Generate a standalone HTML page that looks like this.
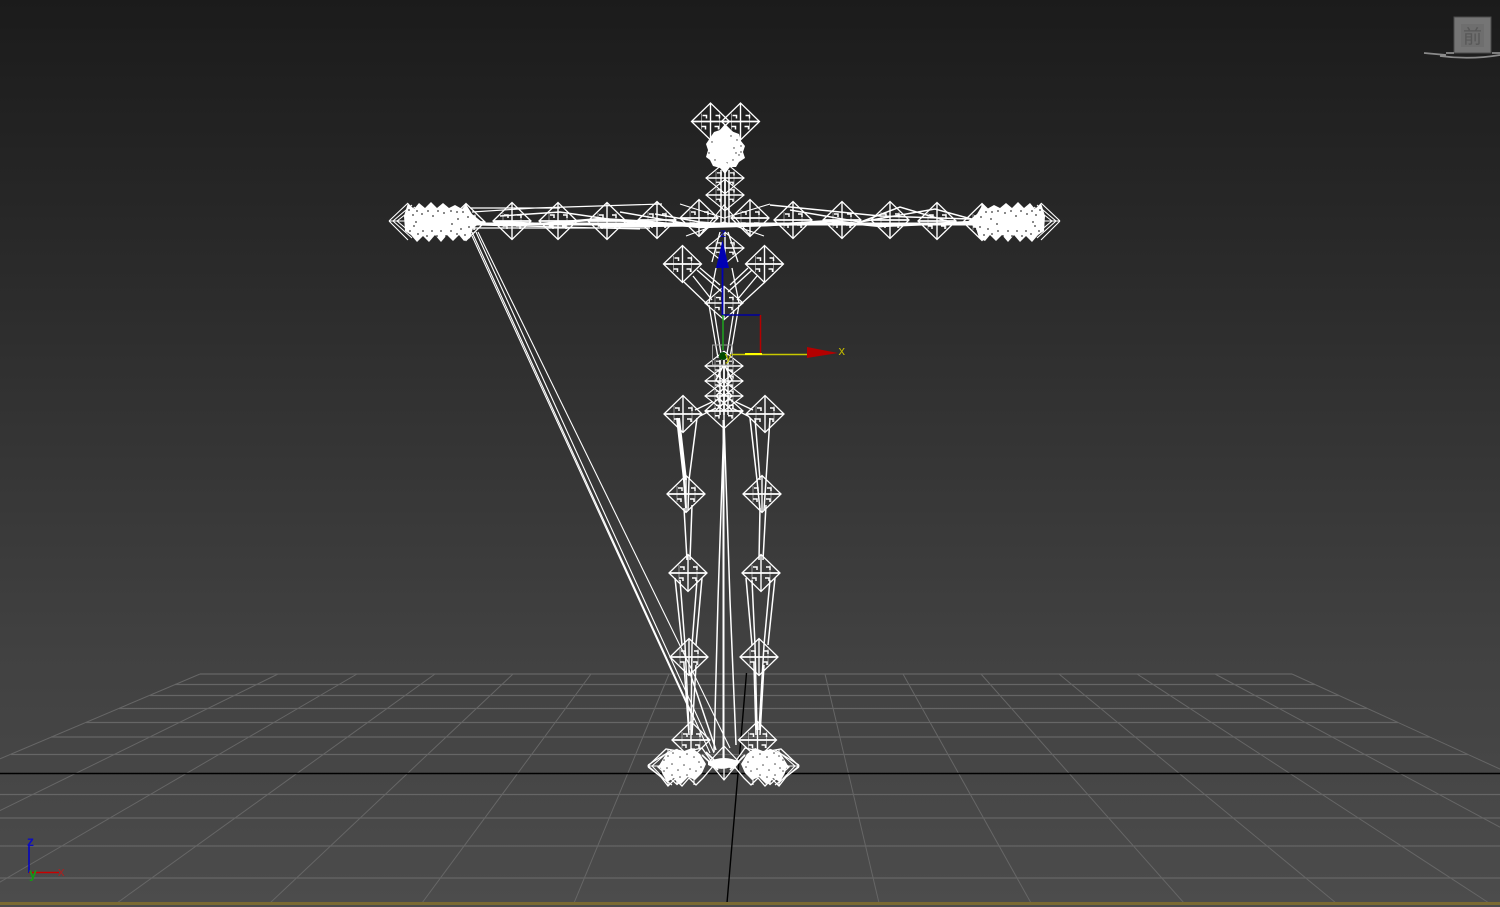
<!DOCTYPE html>
<html><head><meta charset="utf-8"><title>Viewport</title>
<style>
html,body{margin:0;padding:0;width:1500px;height:907px;overflow:hidden;background:#333}
svg{display:block;position:absolute;left:0;top:0}
text{font-family:"Liberation Sans","Noto Sans CJK SC",sans-serif}
</style></head><body>
<svg width="1500" height="907" viewBox="0 0 1500 907" xmlns="http://www.w3.org/2000/svg">
<defs>
<linearGradient id="bg" x1="0" y1="0" x2="0" y2="1">
<stop offset="0" stop-color="#1b1b1b"/><stop offset="0.35" stop-color="#2d2d2d"/><stop offset="0.72" stop-color="#414141"/><stop offset="1" stop-color="#4c4c4c"/>
</linearGradient>
<filter id="soft" x="-5%" y="-5%" width="110%" height="110%"><feGaussianBlur stdDeviation="0.35"/></filter>
<g id="b" fill="none" stroke="#fff" stroke-width="1.300">
<path d="M-19 0L0-18.500L19 0L0 18.500Z"/>
<path d="M-19 0H19" stroke-width="1.800"/>
<path d="M0-18.500V18.500" stroke-width="1.400"/>
<path d="M-9-8L-9 8M9-8L9 8" stroke-width=".7" stroke-opacity=".7"/>
<path d="M-8-6h4v3M5-6h4v3M-9 5h4v3M4 5h4v3" stroke-width="1.500"/>
</g>
<g id="hand">
<path d="M389 221L408 203M389 221L408 240M393 221L412 205M393 221L412 238M397 221L415 207M397 221L415 236M389 221H410" fill="none" stroke="#fff" stroke-width="1.100"/>
<path d="M404 216L408 203L414 209L419 203L425 208L431 202L437 208L443 203L449 208L455 205L462 209L466 204L472 214L482 222L473 228L470 238L464 241L459 235L453 241L447 235L441 242L435 235L429 242L423 236L417 242L411 235L405 231Z" fill="#fff"/>
<path d="M409 210h0M413 215h0M417 211h0M422 214h0M428 211h0M433 216h0M438 211h0M444 213h0M451 211h0M457 212h0M463 212h0M468 217h0M410 231h0M414 226h0M418 234h0M423 231h0M427 236h0M432 231h0M437 236h0M441 231h0M446 236h0M451 231h0M457 234h0M461 229h0M465 235h0M469 227h0M452 224h0M416 222h0M458 219h0" stroke="#2a2a2a" stroke-width="1.700" stroke-linecap="round" fill="none"/>
</g>
<g id="foot">
<path d="M648 766L666 749L684 752L702 748L714 765L703 778L696 785L689 778L682 786L675 779L668 786L661 777Z" fill="none" stroke="#fff" stroke-width="1.300"/>
<path d="M648 766H690M648 767L672 785M648 765L672 750M694 748V785M668 750V785M652 766L668 783M652 766L668 752" fill="none" stroke="#fff" stroke-width="1.100"/>
<path d="M660 764L666 754L676 749L684 751L692 748L700 754L706 764L702 773L695 780L688 777L681 784L674 778L667 782L662 773Z" fill="#fff"/>
<path d="M664 760h0M668 756h0M673 753h0M680 757h0M687 754h0M694 757h0M699 762h0M667 768h0M672 764h0M678 770h0M684 765h0M690 769h0M696 771h0M672 775h0M680 777h0M687 775h0M701 767h0M664 771h0" stroke="#3a3a3a" stroke-width="1.500" stroke-linecap="round" fill="none"/>
</g>
</defs>
<rect width="1500" height="907" fill="url(#bg)"/>

<!-- grid -->
<g fill="none" stroke="#666" stroke-width="1">
<path d="M200 674L-340 903M278 674L-188 903M357 674L-36 903M435 674L117 903M513 674L270 903M591 674L422 903M669 674L574 903M825 674L879 903M903 674L1031 903M981 674L1184 903M1059 674L1336 903M1137 674L1489 903M1215 674L1641 903M1292 674L1793 903"/>
<path d="M200 674H1292M175 684.500H1315M150 695.500H1339M119 708.500H1367M86 722.500H1398M51 737H1430M11 754.500H1468M0 794.500H1500M0 818H1500M0 846H1500M0 878H1500" stroke="#666" stroke-width="1.200"/>
</g>
<path d="M0 773.500H1500" stroke="#000" stroke-width="1.400"/>
<path d="M746.500 673L727 903" stroke="#000" stroke-width="1.400"/>
<rect x="0" y="902" width="1500" height="3" fill="#7a6a32"/>

<!-- view cube -->
<g filter="url(#soft)">
<rect x="1454" y="17" width="37" height="36" fill="#757575" stroke="#4c4c4c" stroke-width="1"/>
<rect x="1461" y="24" width="23" height="23" fill="#6e6e6e"/>
<text x="1472.500" y="43" font-size="19" text-anchor="middle" fill="#585858" style="font-family:'Liberation Sans','Noto Sans CJK SC',sans-serif">前</text>
<path d="M1424 53L1446 55M1446 53H1454M1440 56Q1470 60 1500 55M1492 53H1500" fill="none" stroke="#8a8a8a" stroke-width="1.800"/>
</g>

<!-- skeleton -->
<g filter="url(#soft)">
<!-- long diagonal lines -->
<path d="M472 232L710 753M476 232L714 753M478 232L730 748M472 236L694 720" fill="none" stroke="#fff" stroke-width="1.100"/>

<!-- arm bundle -->
<g fill="none" stroke="#fff">
<path d="M470 208H560M472 212L535 208L662 204M470 228H650M480 225L640 229" stroke-width="1.200"/>
<path d="M495 222L540 224L600 219L650 222L700 227L770 225L830 221L880 226L975 222" stroke-width="2.600"/>
<path d="M470 224H980M600 226L800 224" stroke-width="3"/>
<path d="M655 214L700 222L750 226M500 216L560 212L650 225M770 205L880 216L970 219M790 210L860 222L935 209L975 220M850 226L900 207L950 222M620 212L700 226" stroke-width="1.500"/>
<path d="M680 204L724 218L770 204M686 236L724 222L764 236M700 235L724 205L750 235" stroke-width="1.100"/>
</g>
<use href="#b" transform="translate(512 221)"/>
<use href="#b" transform="translate(558 221)"/>
<use href="#b" transform="translate(607 221)"/>
<use href="#b" transform="translate(657 220)"/>
<use href="#b" transform="translate(699 218)"/>
<use href="#b" transform="translate(750 218)"/>
<use href="#b" transform="translate(793 220)"/>
<use href="#b" transform="translate(842 220)"/>
<use href="#b" transform="translate(890 220)"/>
<use href="#b" transform="translate(937 221)"/>
<use href="#b" transform="translate(466 222)"/>
<use href="#b" transform="translate(982 222)"/>
<use href="#hand"/>
<use href="#hand" transform="translate(1449 0) scale(-1 1)"/>

<!-- head -->
<use href="#b" transform="translate(710.500 121.500)"/>
<use href="#b" transform="translate(740.500 121.500)"/>
<path d="M725 124L731 131L739 134L741 141L745 146L743 152L745 158L739 162L736 167L730 167L725 174L720 168L713 166L710 160L706 157L708 150L706 144L710 138L714 132L720 130Z" fill="#fff"/>
<path d="M737 140h0M741 146h0M734 148h0M739 155h0M733 160h0M712 142h0M715 160h0M727 163h0M731 136h0M741 152h0M736 153h0M709 153h0" stroke="#2a2a2a" stroke-width="1.400" stroke-linecap="round" fill="none"/>
<use href="#b" transform="translate(725 178) scale(1 .85)"/>
<use href="#b" transform="translate(725 195) scale(1 .85)"/>
<path d="M721 170V225M729 170V225M725 170V225" stroke="#fff" stroke-width="1.500" fill="none"/>

<!-- torso -->
<use href="#b" transform="translate(725 248) scale(1 .85)"/>
<use href="#b" transform="translate(682.500 264)"/>
<use href="#b" transform="translate(764.500 264)"/>
<use href="#b" transform="translate(724 303) scale(1 .9)"/>
<path d="M697 270L722 292M693 276L712 300M684 282L708 305M700 268L720 285M752 270L728 292M757 276L737 300M765 282L740 305M748 268L730 285M716 268L709 303M732 268L739 303M709 305L718 358M739 305L730 358M714 310L722 360M734 310L726 360M720 232L712 262M728 232L738 262" fill="none" stroke="#fff" stroke-width="1.300"/>

<!-- pelvis -->
<use href="#b" transform="translate(724 366) scale(1 .8)"/>
<use href="#b" transform="translate(724 381) scale(1 .8)"/>
<use href="#b" transform="translate(724 396) scale(1 .8)"/>
<use href="#b" transform="translate(724 411) scale(1 .95)"/>
<path d="M720 360V415M728 360V415M724 360V415M724 364L716 380L732 396L716 410M724 364L732 380L716 396L732 410" fill="none" stroke="#fff" stroke-width="1.500"/>
<path d="M695 410L712 402M753 410L736 402M700 416L716 408M748 416L732 408" fill="none" stroke="#fff" stroke-width="1.300"/>

<!-- legs -->
<use href="#b" transform="translate(683 414)"/>
<use href="#b" transform="translate(765 414)"/>
<use href="#b" transform="translate(686 494)"/>
<use href="#b" transform="translate(762 494)"/>
<use href="#b" transform="translate(688 573)"/>
<use href="#b" transform="translate(761 573)"/>
<use href="#b" transform="translate(689 657)"/>
<use href="#b" transform="translate(759 657)"/>
<use href="#b" transform="translate(691 740)"/>
<use href="#b" transform="translate(757.500 740)"/>
<g fill="none" stroke="#fff" stroke-width="1.500">
<path d="M677 418L684 480L686 508M679 418L686 480" stroke-width="2"/>
<path d="M697 418L689 480L688 510M750 418L757 480L760 510M770 418L766 480L764 510M755 418L760 480"/>
<path d="M684 508L687 560M692 505L690 560M760 508L759 560M766 505L763 560"/>
<path d="M680 580L685 645L689 730M697 580L692 645L691 730M675 578L682 645M702 578L696 645M752 580L755 645L757 730M770 580L764 645L759 730M746 578L752 645M775 578L768 645"/>
<path d="M684 665L689 735M696 665L692 735M754 665L756 735M764 665L760 735"/>
<path d="M724 420L718 600L714 752M724 420L730 600L736 745"/>
<path d="M723.500 420V760" stroke-width="2"/>
<path d="M689 670L716 750"/>
</g>

<!-- feet -->
<use href="#b" transform="translate(677 767) scale(1 .95)"/>
<use href="#b" transform="translate(770 767) scale(1 .95)"/>
<use href="#foot"/>
<use href="#foot" transform="translate(1447 0) scale(-1 1)"/>
<g fill="none" stroke="#fff" stroke-width="1.200">
<path d="M709 762L724 746L739 762L724 780ZM709 762H739M724 746V780"/>
<path d="M702 755L718 770M706 752L720 766M745 755L730 770M712 764L736 768" stroke-width="1.700"/>
</g>
<path d="M708 762Q724 754 740 762Q724 774 708 765Z" fill="#fff"/>

<!-- gizmo -->
<rect x="712.500" y="345" width="20" height="20" fill="none" stroke="#9a9a9a" stroke-width="1"/>
<path d="M722.500 268V315" stroke="#0000b4" stroke-width="1.800"/>
<path d="M722.500 240L729 268H716Z" fill="#0000b4"/>
<text x="720" y="237" font-size="12" fill="#0000b4">z</text>
<path d="M722 315H760" stroke="#0000a0" stroke-width="1.500"/>
<path d="M760.500 315V353" stroke="#b40000" stroke-width="1.500"/>
<path d="M723 315V350" stroke="#1fa51f" stroke-width="1.500"/>
<path d="M732 354.500H808" stroke="#c8c800" stroke-width="1.500"/>
<path d="M745 354H762" stroke="#ffff00" stroke-width="2"/>
<path d="M807 347L838 353L807 358Z" fill="#b40000"/>
<text x="838.500" y="355" font-size="13" fill="#c0b800">x</text>
<circle cx="723" cy="356" r="4" fill="#064a06"/>
<text x="725" y="361" font-size="13" fill="#c8c800">y</text>
</g>

<!-- corner tripod -->
<g filter="url(#soft)">
<path d="M29 845V873" stroke="#0000c8" stroke-width="1.500"/>
<path d="M29 872.500H59" stroke="#c80000" stroke-width="1.400"/>
<text x="27" y="846" font-size="14" font-weight="bold" fill="#1010c0">z</text>
<text x="58" y="876" font-size="13" fill="#a82020">x</text>
<text x="29" y="878" font-size="14" font-weight="bold" fill="#129a12">y</text>
</g>
</svg>
</body></html>
